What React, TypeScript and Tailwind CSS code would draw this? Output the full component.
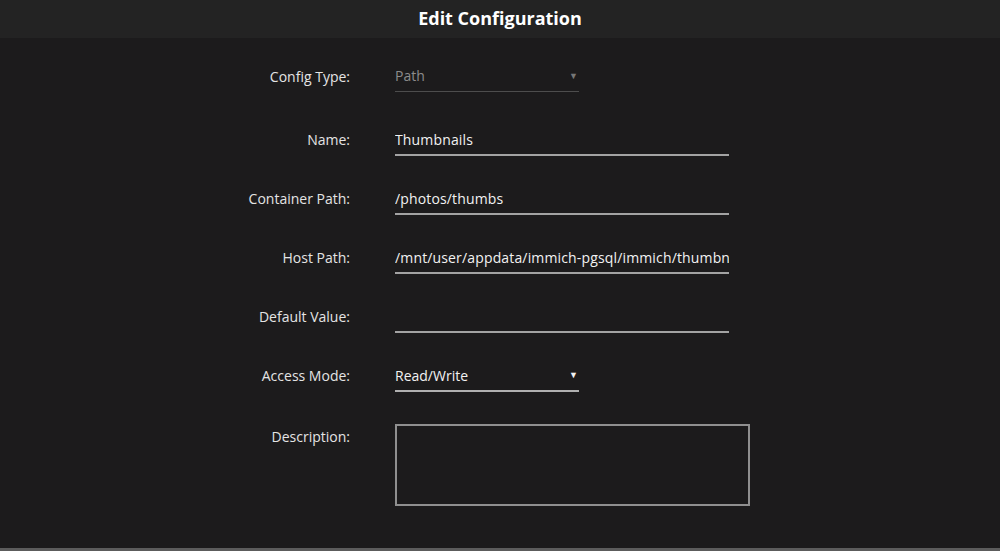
import React from 'react';

const font = { fontFamily: '"Open Sans", "Noto Sans", sans-serif' };

function Label({ text }: { text: string }) {
  return (
    <div className="w-[350px] shrink-0 pt-[2px] text-right text-[14px] text-[#e4e4e4]">{text}</div>
  );
}

function TextField({ value }: { value: string }) {
  return (
    <div className="ml-[45px] flex h-[35px] w-[334px] items-center overflow-hidden whitespace-nowrap border-b-2 border-[#a3a3a3] pt-[3px] text-[14px] tracking-[0.15px] text-[#f2f2f2]">
      {value}
    </div>
  );
}

function SelectField({ value, muted }: { value: string; muted?: boolean }) {
  return (
    <div
      className={
        muted
          ? 'ml-[45px] flex h-[34px] w-[184px] items-center justify-between border-b border-[#4d4d4d] pt-[2px] pr-[1px] text-[14px] text-[#8c8c8c]'
          : 'ml-[45px] flex h-[35px] w-[184px] items-center justify-between border-b-2 border-[#b0b0b0] pt-[3px] pr-[1px] text-[14px] text-[#f2f2f2]'
      }
    >
      <span>{value}</span>
      <span className={muted ? 'text-[9px] text-[#777]' : 'text-[9px] text-[#f2f2f2]'}>▼</span>
    </div>
  );
}

export default function App() {
  return (
    <div className="flex h-[551px] w-[1000px] flex-col bg-[#1c1b1c]" style={font}>
      <div className="flex h-[38px] items-center justify-center bg-[#232323]">
        <h1 className="-mt-[2px] text-[18px] font-bold text-white">Edit Configuration</h1>
      </div>

      <div className="flex flex-1 flex-col pt-[20px]">
        <div className="flex items-center">
          <Label text="Config Type:" />
          <SelectField value="Path" muted />
        </div>
        <div className="mt-[29px] flex items-center">
          <Label text="Name:" />
          <TextField value="Thumbnails" />
        </div>
        <div className="mt-[24px] flex items-center">
          <Label text="Container Path:" />
          <TextField value="/photos/thumbs" />
        </div>
        <div className="mt-[24px] flex items-center">
          <Label text="Host Path:" />
          <TextField value="/mnt/user/appdata/immich-pgsql/immich/thumbn" />
        </div>
        <div className="mt-[24px] flex items-center">
          <Label text="Default Value:" />
          <TextField value="" />
        </div>
        <div className="mt-[24px] flex items-center">
          <Label text="Access Mode:" />
          <SelectField value="Read/Write" />
        </div>
        <div className="mt-[32px] flex items-start">
          <Label text="Description:" />
          <div className="ml-[45px] h-[82px] w-[355px] border-2 border-[#8f8f8f] bg-[#1c1b1c]" />
        </div>
      </div>

      <div className="h-[3px] bg-[#5c5c5c]" />
    </div>
  );
}
